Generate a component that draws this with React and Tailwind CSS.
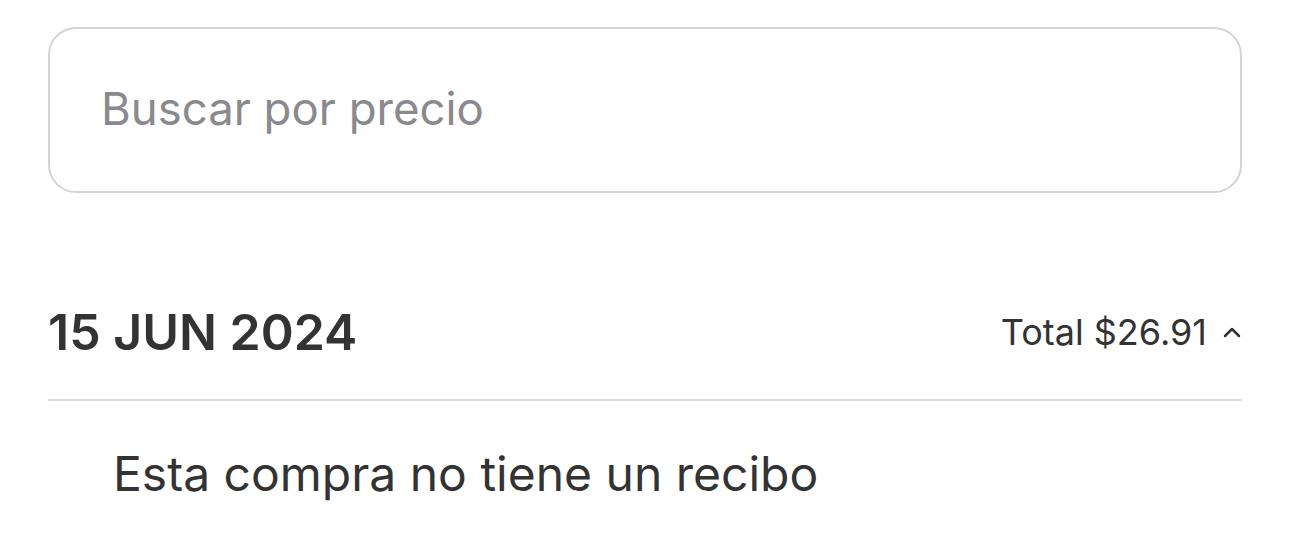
export default function App() {
  return (
    <div className="w-[1290px] h-[538px] bg-white px-12 pt-[27px] overflow-hidden" style={{ fontFamily: "Inter, 'Noto Sans', sans-serif" }}>
      <div className="h-[166px] rounded-[28px] border-2 border-[#d4d4d8] flex items-center pl-[51px]">
        <span className="text-[45.5px] leading-[60px] text-[#8a8a8e] mb-[2px]">Buscar por precio</span>
      </div>
      <div className="mt-[108px] flex items-center justify-between h-[62px]">
        <h2 className="text-[50px] leading-[62px] font-semibold text-[#333333]">15 JUN 2024</h2>
        <div className="flex items-center gap-[15px] text-[#333333]">
          <span className="text-[36px] leading-[50px]">Total $26.91</span>
          <svg width="20" height="14" viewBox="0 0 20 14" fill="none">
            <path d="M3 11 L10 4 L17 11" stroke="#333333" strokeWidth="2.5" strokeLinecap="round" strokeLinejoin="round" />
          </svg>
        </div>
      </div>
      <div className="mt-[36px] h-[2px] bg-[#dcdcdc]" />
      <p className="mt-[41px] pl-[65px] text-[48px] leading-[64px] text-[#333333]">Esta compra no tiene un recibo</p>
    </div>
  );
}
